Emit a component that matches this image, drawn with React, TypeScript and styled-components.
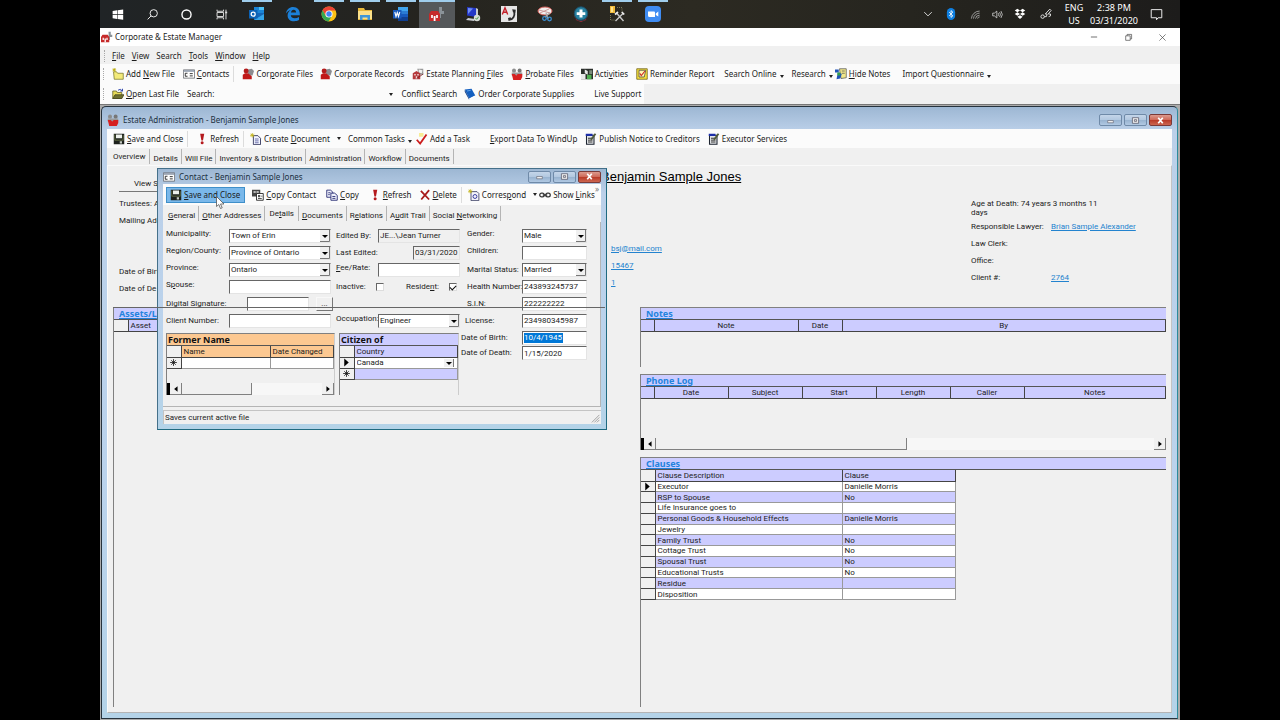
import React from 'react';
import styled, { createGlobalStyle, css } from 'styled-components';

const ui = '"Noto Sans", "Open Sans", sans-serif';
const classic = 'Roboto, "Liberation Sans", sans-serif';

const Global = createGlobalStyle`
  * { box-sizing: border-box; }
  html, body { margin: 0; padding: 0; background: #000; }
  body { font: 8px/12px ${ui}; color: #1c1c1c; }
  button, input, select { font: inherit; color: inherit; margin: 0; padding: 0; border-radius: 0; }
  a { color: #2383cf; }
  h1, h2 { margin: 0; font-weight: normal; }
  svg { display: block; flex: none; }
`;

/* ---------- shell ---------- */
const Screen = styled.div`
  min-height: 100vh;
  display: flex;
  flex-direction: column;
  margin: 0 100px;
  background: #ababab;
`;
const Taskbar = styled.div`
  height: 28px;
  display: flex;
  background: linear-gradient(90deg, #202426, #25241f 30%, #2c2a22 55%, #26251f 75%, #1d1c1b);
  color: #fff;
`;
const Task = styled.button<{ $w?: number; $open?: boolean; $active?: boolean }>`
  width: ${p => p.$w ?? 36}px;
  height: 28px;
  display: flex;
  align-items: center;
  justify-content: center;
  border: 0;
  background: ${p => (p.$active ? '#55585a' : 'transparent')};
  ${p => p.$open && css`
    background-image: linear-gradient(#9fcdec, #9fcdec);
    background-size: ${p.$active ? '100%' : '30px'} 2px;
    background-position: top center;
    background-repeat: no-repeat;
  `}
`;
const Tray = styled.div`
  margin-left: auto;
  display: flex;
  align-items: center;
  padding-right: 7px;
`;
const TrayCell = styled.div<{ $w: number }>`
  width: ${p => p.$w}px;
  display: flex;
  flex-direction: column;
  align-items: center;
  font-size: 9px;
  line-height: 13px;
  white-space: nowrap;
`;
const TitleBar = styled.header`
  height: 18px;
  display: flex;
  align-items: center;
  gap: 2px;
  padding: 0 2px 0 1px;
  background: #fff;
`;
const AppName = styled.span`flex: 1;`;
const TitleButton = styled.button`
  width: 32px;
  height: 18px;
  border: 0;
  background: none;
  display: flex;
  align-items: center;
  justify-content: center;
`;
const MenuBar = styled.nav`
  height: 18px;
  display: flex;
  align-items: center;
  gap: 7px;
  padding: 1px 0 0 4px;
  background: #f0f0f0;
`;
const FlatButton = styled.button`
  border: 0;
  background: none;
  white-space: nowrap;
  line-height: 12px;
`;
const Grip = styled.span<{ $flush?: boolean }>`
  width: 1px;
  height: 12px;
  margin-right: ${p => (p.$flush ? 0 : 8)}px;
  border-left: 1px dotted #a8a8a8;
`;
const Bar = styled.div<{ $h?: number; $pad?: number; $fit?: boolean }>`
  height: ${p => p.$h ?? 20}px;
  width: ${p => (p.$fit ? 'fit-content' : 'auto')};
  display: flex;
  align-items: center;
  padding: 0 ${p => p.$pad ?? 3}px;
  background: #fbfbfb;
  overflow: hidden;
`;
const Strip = styled.div`background: #f0f0f0;`;
const Item = styled.button<{ $l?: number; $hot?: boolean }>`
  height: 16px;
  margin-left: ${p => p.$l ?? 0}px;
  display: flex;
  align-items: center;
  gap: 2px;
  padding: 0;
  border: 0;
  background: none;
  white-space: nowrap;
  flex: none;
  ${p => p.$hot && css`
    padding: 0 4px 0 3px;
    border: 1px solid #3f8fc9;
    background: #7ab8ea;
  `}
`;
const Sep = styled.span`
  width: 1px;
  height: 16px;
  margin: 0 4px;
  background: #dcdcdc;
  flex: none;
`;
const Drop = styled.span<{ $low?: boolean }>`
  width: 0;
  height: 0;
  margin-left: ${p => (p.$low ? 1 : 5)}px;
  margin-top: ${p => (p.$low ? 5 : 0)}px;
  border: 2px solid transparent;
  border-top: 3px solid #222;
  border-bottom: 0;
`;
const More = styled.span`
  margin: 0 0 12px auto;
  line-height: 8px;
  color: #777;
`;
const SearchLabel = styled.label`
  display: flex;
  align-items: center;
  margin-left: 8px;
`;
const SearchBox = styled.input`
  width: 166px;
  height: 14px;
  margin-left: 4px;
  border: 0;
  background: transparent;
`;

/* ---------- MDI windows ---------- */
const Mdi = styled.main`
  flex: 1;
  display: flex;
  position: relative;
  padding: 1px 2px 1px 1px;
  border-top: 1px solid #777;
`;
const Frame = styled.section`
  flex: 1;
  display: flex;
  flex-direction: column;
  min-width: 0;
  padding: 0 5px 5px;
  border: 1px solid #27333d;
  border-right-color: #2c8b9c;
  border-radius: 5px 5px 0 0;
  background: linear-gradient(#9db7d3, #bbd0e9 24px, #bbd3ec 60%, #b4d3e8);
`;
const Caption = styled.header<{ $h: number; $top?: number }>`
  height: ${p => p.$h}px;
  padding-top: ${p => p.$top ?? 0}px;
  display: flex;
  align-items: center;
  gap: 4px;
  color: #20303f;
`;
const CaptionText = styled.h2`
  flex: 1;
  font-size: 8px;
  line-height: 12px;
`;
const CaptionButtons = styled.div`
  display: flex;
  gap: 2px;
`;
const CaptionButton = styled.button<{ $close?: boolean }>`
  width: 23px;
  height: 12px;
  display: flex;
  align-items: center;
  justify-content: center;
  border: 1px solid ${p => (p.$close ? '#7a3a38' : '#6f8aa8')};
  border-radius: 2px;
  background: ${p => (p.$close
    ? 'linear-gradient(#dc9a8e, #cf6a59 48%, #b93a28 52%, #cc6650)'
    : 'linear-gradient(#c4d5e9, #b2c8e0 48%, #98b3d0 52%, #b1c9e3)')};
`;
const Client = styled.div`
  flex: 1;
  display: flex;
  flex-direction: column;
  min-height: 0;
  background: #f0f0f0;
  font-family: ${classic};
`;
const Tabs = styled.div`
  height: 17px;
  display: flex;
  align-items: center;
  padding-left: 2px;
  background: #f0f0f0;
`;
const Tab = styled.button<{ $on?: boolean }>`
  height: 15px;
  padding: ${p => (p.$on ? '0 4px' : '4px 3px 0')};
  border: 0;
  border-right: 1px solid #b4b4b4;
  background: none;
  line-height: 11px;
  white-space: nowrap;
`;

/* ---------- overview page ---------- */
const Page = styled.div`
  flex: 1;
  display: flex;
  flex-direction: column;
  padding: 0 5px 5px;
  border: 1px solid #fafafa;
  border-right-color: #c4c4c4;
  border-bottom-color: #b4b4b4;
`;
const Summary = styled.div`
  height: 141px;
  display: grid;
  grid-template-columns: 488px 1fr 195px;
`;
const SummaryCol = styled.div<{ $top: number; $left?: number }>`
  padding: ${p => p.$top}px 0 0 ${p => p.$left ?? 0}px;
  min-width: 0;
`;
const ViewButton = styled.button`
  width: 90px;
  height: 15px;
  display: block;
  margin-bottom: 3px;
  padding-left: 15px;
  text-align: left;
  border: 0;
  border-bottom: 1px solid #777;
  background: #f0f0f0;
`;
const Line = styled.div<{ $left?: number }>`
  height: 17px;
  display: flex;
  align-items: center;
  padding-left: ${p => p.$left ?? 0}px;
  line-height: 12px;
  white-space: nowrap;
`;
const LineLabel = styled.span`width: 80px;`;
const Age = styled.p`
  width: 130px;
  height: 19px;
  margin: 0;
  line-height: 9px;
`;
const ClientName = styled.h1`
  height: 16px;
  margin-bottom: 55px;
  font: 13px/16px "Liberation Sans", sans-serif;
  color: #000;
  text-decoration: underline;
  white-space: nowrap;
`;
const Panels = styled.div`
  flex: 1;
  display: grid;
  grid-template-columns: 493fr 526fr;
  gap: 34px;
`;
const Stack = styled.div`
  display: flex;
  flex-direction: column;
  gap: 7px;
`;
const Panel = styled.section<{ $h?: number }>`
  ${p => (p.$h ? `height: ${p.$h}px;` : 'flex: 1;')}
  display: flex;
  flex-direction: column;
  border-left: 1px solid #808080;
  border-top: 1px solid #808080;
`;
const PanelTitle = styled.h2<{ $plain?: boolean; $warm?: boolean }>`
  height: 12px;
  padding-left: ${p => (p.$plain ? 1 : 5)}px;
  font: bold 9px/11px ${ui};
  color: ${p => (p.$plain ? '#111' : '#2383dd')};
  text-decoration: ${p => (p.$plain ? 'none' : 'underline')};
  background: ${p => (p.$warm ? '#fcc891' : '#ccccff')};
  border-bottom: 1px solid #555;
`;
const Grid = styled.table<{ $w?: string; $h?: number }>`
  width: ${p => p.$w ?? '100%'};
  ${p => p.$h && css`height: ${p.$h}px;`}
  table-layout: fixed;
  border-collapse: collapse;
  line-height: 9px;
`;
const Col = styled.col<{ $w?: number }>`
  ${p => p.$w && css`width: ${p.$w}px;`}
`;
const Th = styled.th<{ $left?: boolean; $warm?: boolean; $blank?: boolean }>`
  height: 11px;
  padding: 0 2px;
  font-weight: normal;
  text-align: ${p => (p.$left ? 'left' : 'center')};
  background: ${p => (p.$blank ? '#f0f0f0' : p.$warm ? '#fcc891' : '#ccccff')};
  border: 1px solid #444;
  border-width: 0 1px 1px 0;
  white-space: nowrap;
`;
const Td = styled.td<{ $head?: boolean; $tint?: boolean; $h?: number }>`
  height: ${p => p.$h ?? 11}px;
  padding: 0 2px;
  background: ${p => (p.$head ? '#f0f0f0' : p.$tint ? '#ccccff' : '#fff')};
  border: 1px solid ${p => (p.$head ? '#444' : '#999')};
  border-width: 0 1px 1px 0;
  white-space: nowrap;
`;
const Scroll = styled.div`
  height: 12px;
  display: flex;
  align-items: stretch;
  margin-top: auto;
  background: #f7f7f7;
  border-left: 3px solid #000;
`;
const ScrollArrow = styled.button`
  width: 12px;
  display: flex;
  align-items: center;
  justify-content: center;
  background: #f0f0f0;
  border: 0;
  border-right: 1px solid #808080;
  border-bottom: 1px solid #808080;
`;
const Thumb = styled.span<{ $w: string }>`
  width: ${p => p.$w};
  margin-right: auto;
  background: #f0f0f0;
  border-right: 1px solid #808080;
  border-bottom: 1px solid #808080;
`;

/* ---------- contact window ---------- */
const Floating = styled(Frame)`
  position: absolute;
  left: 57px;
  top: 63px;
  width: 450px;
  height: 262px;
  border-color: #45708a #1f6a80 #1f6a80 #45708a;
  border-radius: 0;
`;
const Form = styled.div`
  flex: 1;
  display: flex;
  padding: 5px 3px 0;
  border-right: 1px solid #b4b4b4;
  border-bottom: 1px solid #b4b4b4;
`;
const FormLeft = styled.div`width: 295px;`;
const FormCols = styled.div`display: flex; gap: 5px;`;
const Fields = styled.div<{ $w: number }>`width: ${p => p.$w}px;`;
const Field = styled.label<{ $label: number; $left?: number; $h?: number; $up?: boolean }>`
  height: ${p => p.$h ?? 17}px;
  display: grid;
  grid-template-columns: ${p => p.$label}px 1fr;
  align-items: center;
  padding-left: ${p => p.$left ?? 0}px;
  line-height: 12px;
  white-space: nowrap;
  > span:first-child { padding-bottom: ${p => (p.$up ? 3 : 0)}px; }
`;
const sunken = css`
  height: 14px;
  padding: 0 1px;
  border: 1px solid #e4e4e4;
  border-left-color: #666;
  border-top-color: #666;
  background: #fff;
  min-width: 0;
  width: 100%;
`;
const Input = styled.input<{ $grey?: boolean; $indent?: number; $marked?: boolean }>`
  ${sunken}
  width: ${p => (p.$indent ? `calc(100% - ${p.$indent}px)` : '100%')};
  margin-left: ${p => p.$indent ?? 0}px;
  ${p => p.$grey && css`background: #f0f0f0;`}
  ${p => p.$marked && css`
    color: #fff;
    background: linear-gradient(#0078d7, #0078d7) 1px 1px / 39px 10px no-repeat, #fff;
  `}
`;
const Signature = styled.span`
  display: grid;
  grid-template-columns: 62px 17px;
  gap: 7px;
  padding-left: 18px;
`;
const Dots = styled.button`
  height: 14px;
  border: 1px solid #f8f8f8;
  border-right-color: #777;
  border-bottom-color: #777;
  background: #f0f0f0;
  line-height: 8px;
`;
const PickBox = styled.span<{ $bare?: boolean }>`
  position: relative;
  display: block;
  min-width: 0;
  select {
    ${sunken}
    appearance: none;
    display: block;
    outline: 0;
    ${p => p.$bare && css`border: 0; padding: 0; height: 10px;`}
  }
  svg {
    position: absolute;
    right: 1px;
    top: 1px;
    pointer-events: none;
  }
`;
const Checks = styled.div`
  height: 17px;
  display: flex;
  align-items: center;
  padding-right: 3px;
  justify-content: space-between;
  label { display: flex; align-items: center; gap: 10px; }
`;
const Check = styled.input`
  appearance: none;
  width: 8px;
  height: 8px;
  border: 1px solid #ddd;
  border-left-color: #666;
  border-top-color: #666;
  background: #fff;
  display: grid;
  place-items: center;
  &:checked::after {
    content: '';
    width: 5px;
    height: 3px;
    border: solid #111;
    border-width: 0 0 1px 1px;
    transform: rotate(-45deg);
  }
`;
const Grids = styled.div`
  display: flex;
  gap: 4px;
  padding-top: 4px;
`;
const SubGrid = styled(Panel)<{ $w: number }>`
  flex: none;
  width: ${p => p.$w}px;
  height: 62px;
  border-right: 1px solid #ccc;
`;
const Status = styled.footer`
  height: 14px;
  display: flex;
  align-items: center;
  justify-content: space-between;
  margin-top: 3px;
  padding: 0 1px;
  border-top: 1px solid #c4c4c4;
  border-left: 1px solid #c4c4c4;
`;
const SeamLine = styled.div`
  position: absolute;
  left: 13px;
  top: 202px;
  width: 492px;
  height: 1px;
  background: #666;
  pointer-events: none;
`;
const Pointer = styled.div`
  position: absolute;
  left: 116px;
  top: 91px;
  pointer-events: none;
`;

/* ---------- drawings ---------- */
const art: Record<string, React.ReactNode> = {
  win: <path fill="#fff" d="M2 3.600l5.500-.8v5H2zM8.200 2.700L15 1.700v6.100H8.200zM2 8.500h5.500v5L2 12.700zM8.200 8.500H15v6.100l-6.800-1z" />,
  search: <g fill="none" stroke="#eee" strokeWidth="1.2"><circle cx="9.500" cy="6.500" r="4.500" /><path d="M6.300 9.700L2 14" /></g>,
  ring: <circle cx="8" cy="8" r="5.600" fill="none" stroke="#fff" strokeWidth="1.700" />,
  views: <g fill="none" stroke="#ddd" strokeWidth="1.2"><path d="M2.500 2v2h8V2M2.500 14v-2h8v2M2.500 5.500h8v5h-8zM13.500 2v12" /><path d="M12.500 5.500h2.500" strokeWidth="2" /></g>,
  outlook: <g><path fill="#1a86d8" d="M5 1h10v6H5z" /><path fill="#4fc0f4" d="M10 1h5v3h-5z" /><path fill="#1566b8" d="M5 7h10v7H5z" /><path fill="#35a5ea" d="M5 14l10-6v6z" /><path fill="#0c62b5" d="M0 4h8.500v8.500H0z" /><circle cx="4.200" cy="8.200" r="2" fill="none" stroke="#fff" strokeWidth="1.300" /></g>,
  edge: <path fill="#1c80d8" d="M1 7.500C1.500 3.500 4.500 1 8.200 1c4.300 0 6.600 3.200 6.600 6.500V9.200H5.800c.1 2 1.700 3 3.900 3 1.600 0 3-.4 4.300-1.200v3c-1.400.8-3 1.200-4.900 1.200-4 0-6.500-2.300-6.500-5.800 0-2.300 1.200-4.200 3.200-5.300C3.800 4.700 2.200 5.700 1 7.500zM5.900 6.600h5.200c0-1.700-.8-2.800-2.400-2.800-1.500 0-2.500 1.100-2.800 2.800z" />,
  chrome: <g><circle cx="8" cy="8" r="7.500" fill="#fbc116" /><path fill="#ea4335" d="M1.500 4.300A7.500 7.500 0 0 1 14.600 4.500H8L4.900 9.500z" /><path fill="#34a853" d="M1.500 4.300l3.500 6 6-.5-3.500 5.700A7.500 7.500 0 0 1 1.500 4.300z" /><circle cx="8" cy="8" r="3.600" fill="#fff" /><circle cx="8" cy="8" r="2.700" fill="#4285f4" /></g>,
  folder: <g><path fill="#e8b93c" d="M1 2h6l1 2h7v10H1z" /><path fill="#fbe08a" d="M1 5h14v8H1z" /><path fill="#3f97d8" d="M3 9h10v5h-2.500v-2.500h-5V14H3z" /></g>,
  word: <g><path fill="#41a5ee" d="M5 1h10v4H5z" /><path fill="#2b7cd3" d="M5 5h10v3H5z" /><path fill="#185abd" d="M5 8h10v3H5z" /><path fill="#103f91" d="M5 11h10v4H5z" /><path fill="#185abd" d="M0 4h8.500v8.500H0z" /><path fill="none" stroke="#fff" strokeWidth="1.100" d="M1.800 6l1.200 4.500L4.300 6.500 5.500 10.500 6.800 6" /></g>,
  app: <g><path fill="#8a9298" d="M10 1h3v4h2v3h-3v4h-1.500z" /><path fill="#c62a2a" d="M0 8l2-3h7l2 3v7H0z" /><path fill="#f2dede" d="M2 9h2v3H2zM7 9h2v3H7z" /><path fill="#fff" d="M4.700 10h1.800v5H4.700z" /></g>,
  rdp: <g><path fill="#2438c8" d="M2 1l9 1v9l-9-1.500z" /><path fill="#6f8df2" d="M3 2l5 .6L3 8z" /><path fill="#c8ccd2" d="M11 2l2 1v8l-2 1zM3 12l7 1-1 2-8-1z" /><circle cx="12" cy="12" r="3.200" fill="#d7dcd7" /><path d="M10.500 12l1.200 1.300 2-2.600" fill="none" stroke="#4a9a4a" /></g>,
  pdf: <g><path fill="#e6e6e6" d="M0 0h16v16H0z" /><path fill="none" stroke="#c4202a" strokeWidth="1.400" d="M1.300 8.500L4 1.800l2.700 6.700M2.400 6.200h3.400" /><path fill="none" stroke="#2a2a2a" strokeWidth="1.800" d="M8.500 13.600c3.500 0 5.500-3.600 4.800-8" /><path fill="#2a2a2a" d="M11.200 3.200l3.600.6-.5 3-2.300-.6zM7 12l2.600-.8.8 2.600-2.800 1.200z" /></g>,
  snip: <g><ellipse cx="8" cy="5" rx="7" ry="4" fill="#f1eeee" stroke="#d4605a" /><path d="M2 4l11 3M3 7l9-4" stroke="#c99" /><path d="M9 7l2 6M13 7l-5 4" stroke="#aaa" strokeWidth="1.2" /><circle cx="7.500" cy="12.500" r="1.800" fill="none" stroke="#3c8ed0" strokeWidth="1.300" /><circle cx="12.500" cy="13" r="1.800" fill="none" stroke="#3c8ed0" strokeWidth="1.300" /></g>,
  plus: <g><path fill="#a0283a" d="M1 8a7 7 0 0 0 14 0l-2 6-5 2-5-2z" /><circle cx="8" cy="7.500" r="6.700" fill="#27809f" stroke="#1d4e68" /><path fill="#fff" d="M6.500 3.500h3v2.700h2.800v2.700H9.500v2.700h-3V8.900H3.700V6.200h2.800z" /></g>,
  tools: <g><path fill="#f0bb3c" d="M1 0h5v7H1z" /><path fill="#ffe38e" d="M2 1h2v5H2z" /><path d="M8 1.500h5v5M1.500 9v5h4" fill="none" stroke="#7a7a5a" strokeDasharray="1 1" /><path d="M7.500 7l7 8M14 7.500L6.500 15" stroke="#c8c8c8" strokeWidth="1.400" /><path d="M6 8.500l3-2.500M12.800 6l2.400 2.500" stroke="#ececec" strokeWidth="1.800" /></g>,
  zoom: <g><rect width="16" height="16" rx="4" fill="#3f8cf2" /><path fill="#fff" d="M3 5.500h6q1 0 1 1V11H4.500Q3 11 3 9.500zM10.800 7.500L13.300 5.600v5L10.800 9z" /></g>,
  chevron: <path d="M2 5l6 6 6-6" fill="none" stroke="#eee" strokeWidth="1.400" />,
  bt: <g><rect x="2.500" width="11" height="16" rx="5.500" fill="#0f7fe0" /><path d="M5.500 5.500l5 5L8 12.500v-9l2.500 2-5 5" fill="none" stroke="#fff" strokeWidth="1.100" /></g>,
  wifi: <g fill="none" stroke="#bbb" strokeWidth="1.100"><path d="M2 14A12 12 0 0 1 14 3M5 14a9 9 0 0 1 9-8M8 14a6 6 0 0 1 6-5M11 14a3 3 0 0 1 3-2.500" /></g>,
  sound: <g fill="none" stroke="#ddd" strokeWidth="1.100"><path d="M1 6h2.500L7 3v10l-3.500-3H1zM9 6q1.500 2 0 4M11 4.500q2.600 3.500 0 7M13 3q4 5 0 10" /></g>,
  dropbox: <path fill="#fff" d="M4.500 1L8 3.300 4.500 5.600 1 3.300zM11.500 1L15 3.300l-3.500 2.300L8 3.300zM4.500 5.700L8 8l-3.500 2.300L1 8zM11.500 5.700L15 8l-3.500 2.300L8 8zM8 9.500l3.500 2.300L8 14.500l-3.500-2.700z" />,
  pen: <g fill="none" stroke="#ddd" strokeWidth="1.300"><circle cx="3.500" cy="11.500" r="2.300" /><path d="M5.800 11.500h2.700l1-3.500H7l6-6.500 1.800 1.800L11 8h3v2.500l-2.500 1" /></g>,
  notice: <path d="M1.500 2h13v10H10l-2 2.500V12H1.500z" fill="none" stroke="#eee" strokeWidth="1.2" />,
  minus: <path d="M3 8h10" stroke="#444" strokeWidth="1.2" />,
  restore: <path d="M3 5h8v8H3zM5.500 5V2.500h8v8H11" fill="none" stroke="#444" strokeWidth="1.2" />,
  close: <path d="M2.500 2.500l11 11M13.500 2.500l-11 11" stroke="#444" strokeWidth="1.2" />,
  newfile: <g><path fill="#f3ea7a" stroke="#77762a" d="M2 5h4l1.500 2H15v8H3z" /><path stroke="#b8a800" d="M3 0v5M.5 2.500h5M1 .8l4 3.500M5 .8L1 4.300" /></g>,
  card: <g><path fill="#fff" stroke="#55595f" d="M.5 2.500h15v11H.5z" /><path fill="#8b97a8" d="M1 3h14v2H1z" /><path stroke="#222" strokeWidth="1.2" d="M6 7H3v4h3M9 7.500h4M9 10.500h4" fill="none" /></g>,
  corp: <g><path fill="#8c8c90" d="M8 2l5-1 3 3-2 6H8z" /><circle cx="5.500" cy="4" r="3.300" fill="#b41c1c" /><path fill="#c01818" d="M1 15V9l3-2h4l5 4v4z" /></g>,
  estate: <g><path fill="#999" d="M7 1h8v8H9z" /><path fill="#f2f2f2" d="M9 2l5 1-1 4-4-1z" /><path fill="#b5393c" d="M1 7l5-3 5 3v8H1z" /><path fill="#eed5d5" d="M3 8h2v2H3zM7 8h2v2H7zM5 11h2v4H5z" /><path stroke="#7a1a1c" d="M6 14l9-6" /></g>,
  probate: <g><circle cx="4" cy="3.500" r="2.700" fill="#8d8d8d" /><circle cx="11.500" cy="3.500" r="2.700" fill="#777" /><path fill="#9a9a9a" d="M1 6h14v4H1z" /><path fill="#d62020" d="M1 8h4l2 2 2-2h6v4l-2 4H3z" /></g>,
  activity: <g><path fill="#2b2f2b" d="M0 1h16v14H0z" /><path fill="#e8e8e8" d="M5 2l4 2v5l-4-2zM0 8h6v7H0z" /><path fill="#4fae50" d="M8 9h6v6H8z" /><path fill="#7b8c7b" d="M11 3h4v5h-4z" /></g>,
  reminder: <g><path fill="#f5e03c" stroke="#6a5a10" d="M1 1h14v14H1z" /><path fill="#fff6b0" stroke="#444" d="M4 3h9l-2 9H4z" /><path d="M5 7l2 3 5-6" stroke="#c22" fill="none" strokeWidth="1.400" /></g>,
  hide: <g><path fill="#f2e88a" stroke="#555" d="M6 1h9v12l-7 1z" /><path fill="#1f53b8" d="M0 2h5v4H0zM5 6l4 2-2 6-5 1 1-5z" /><path fill="#32a04c" d="M3 6h4v4H3z" /><path d="M9 4h4M9 7h4" stroke="#555" /></g>,
  open: <g><path fill="#e8dc58" stroke="#5c5a20" d="M1 4h5l1 2h6v8H1z" /><path fill="#6f7030" stroke="#43441c" d="M4 9h12l-3 5H1z" /><path d="M8 3q3-3 6 1M14 1v3h-3" stroke="#223aa8" fill="none" strokeWidth="1.2" /></g>,
  book: <g><path fill="#1560c0" d="M1 2l9-1 5 9-8 4z" /><path fill="#0c3c88" d="M1 2l6 12v2L1 5z" /><path fill="#fff" d="M7 14l8-4v1.500L7 15.500z" /><path stroke="#7ab6f0" d="M4 4l5-1" /></g>,
  save: <g><path fill="#1d211d" d="M1 1h14v14H1z" /><path fill="#eef2ec" d="M4 2h8v5H4z" /><path fill="#76834e" d="M2 2h1v8H2zM13 3h1v7h-1zM3 9h10v1H3z" /><path fill="#c6ccc4" d="M9 11h3v3H9z" /></g>,
  bang: <g fill="#b51a1e"><path d="M5.500 1h5.500L9.300 10H7.200z" /><circle cx="8.200" cy="13" r="2" /></g>,
  doc: <g><path fill="#f2f4ff" stroke="#33355c" strokeWidth="1.2" d="M4.500 3.500h6L14 7v8.500H4.500z" /><path stroke="#444a90" d="M6.500 8h5M6.500 10.500h5M6.500 13h5" /><path stroke="#c0b010" d="M3 0v6M0 3h6M1 1l4 4M5 1L1 5" /></g>,
  tick: <g><path fill="#f6e66a" d="M4 0h6v5H4z" opacity=".7" /><path d="M1 9l4.500 5L14 2" fill="none" stroke="#cc1c1c" strokeWidth="2.400" /></g>,
  publish: <g><path fill="#e4e6e8" stroke="#1e2430" strokeWidth="1.400" d="M2 3h10v12H2z" /><path fill="#1c2fa8" d="M1 1h9v3H1z" /><path d="M4 7h6M4 9.500h6M4 12h6" stroke="#222" strokeWidth="1.2" /><path d="M8 9l6-8" stroke="#4f5a3a" strokeWidth="2.400" /></g>,
  copycard: <g><path fill="#444" d="M0 1h11v9H0z" /><path fill="#ddd" d="M2 3h3v2H2zM6 3h3v2H6z" /><path fill="#fff" stroke="#2a2a2a" strokeWidth="1.2" d="M6 6h9v9H6z" /><path fill="#555" d="M8 8h3v3H8zM8 12h5v1.200H8zM12 9h2v1h-2z" /></g>,
  copy: <g fill="#eef0fb" stroke="#2a2f74" strokeWidth="1.2"><path d="M1 1.500h5L9 4v7H1z" /><path d="M6.500 5.500h5L15 8.500V15H6.500z" /><path d="M3 5h3M3 7.500h2M8.500 10h4M8.500 12.500h4" /></g>,
  cross: <path d="M2.500 2.500l11 11.500M13.500 1.500L3 14" stroke="#a81a1a" strokeWidth="2.400" />,
  mail: <g><path fill="#f4f4fb" stroke="#44476a" strokeWidth="1.2" d="M4 3.500h8L14.500 6v9.500H4z" /><circle cx="9.300" cy="10" r="2.600" fill="none" stroke="#33389a" strokeWidth="1.300" /><path stroke="#c0b010" d="M3 0v6M0 3h6M1 1l4 4M5 1L1 5" /></g>,
  links: <g fill="none" stroke="#333" strokeWidth="1.700"><rect x="1" y="5.500" width="6" height="5" rx="2.500" /><rect x="9" y="5.500" width="6" height="5" rx="2.500" /><path d="M5 8h6" /></g>,
  arrowL: <path fill="#000" d="M10.500 3.500v9L5 8z" />,
  arrowR: <path fill="#000" d="M5.500 3.500v9L11 8z" />,
  play: <path fill="#000" d="M4 1v14l8-7z" />,
  star: <path d="M8 2v12M2 8h12M4 4l8 8M12 4l-8 8" stroke="#111" strokeWidth="1.400" />,
  wmin: <path d="M3 8h10v4H3z" fill="#eee" stroke="#556" />,
  wmax: <path d="M2.500 3h11v10h-11zM6 6.500h4v3H6z" fill="#eee" stroke="#556" strokeWidth="1.300" />,
  wclose: <path d="M4 3l8 10M12 3L4 13" stroke="#fff" strokeWidth="3" />,
  resize: <path d="M15 3L3 15M15 7l-8 8M15 11l-4 4" stroke="#999" strokeWidth="1.400" />,
};
const Icon = ({ n, s = 12 }: { n: string; s?: number }) => (
  <svg width={s} height={s} viewBox="0 0 16 16" aria-hidden="true">{art[n]}</svg>
);

/* An underscore in a caption marks the accelerator letter after it. */
const Accel = ({ t }: { t: string }) => {
  const i = t.indexOf('_');
  if (i < 0) return <span>{t}</span>;
  return <span>{t.slice(0, i)}<u>{t[i + 1]}</u>{t.slice(i + 2)}</span>;
};
const Tool = ({ n, t, l, hot, drop }: { n?: string; t: string; l?: number; hot?: boolean; drop?: 'mid' | 'low' }) => (
  <Item $l={l} $hot={hot}>
    {n && <Icon n={n} />}
    <Accel t={t} />
    {drop && <Drop $low={drop === 'low'} />}
  </Item>
);
const WindowButtons = () => (
  <CaptionButtons>
    <CaptionButton aria-label="Minimize"><Icon n="wmin" s={9} /></CaptionButton>
    <CaptionButton aria-label="Maximize"><Icon n="wmax" s={9} /></CaptionButton>
    <CaptionButton aria-label="Close" $close><Icon n="wclose" s={9} /></CaptionButton>
  </CaptionButtons>
);
const Pick = ({ v, bare, label }: { v: string; bare?: boolean; label?: string }) => (
  <PickBox $bare={bare}>
    <select defaultValue={v} aria-label={label}><option>{v}</option></select>
    <svg width="10" height={bare ? 8 : 12} viewBox="0 0 10 12" preserveAspectRatio="xMidYMid slice" aria-hidden="true">
      <path fill="#f0f0f0" d="M0 0h10v12H0z" />
      <path fill="none" stroke="#777" d="M9.500 0v11.500H0" />
      <path fill="#000" d="M2 5h6L5 8z" />
    </svg>
  </PickBox>
);

const tasks: { n: string; w?: number; open?: boolean; active?: boolean }[] = [
  { n: 'win', w: 35 }, { n: 'search', w: 35 }, { n: 'ring', w: 33 }, { n: 'views', w: 36 },
  { n: 'outlook', open: true }, { n: 'edge' }, { n: 'chrome', open: true }, { n: 'folder', open: true },
  { n: 'word', open: true }, { n: 'app', open: true, active: true }, { n: 'rdp' }, { n: 'pdf' },
  { n: 'snip' }, { n: 'plus' }, { n: 'tools', open: true }, { n: 'zoom', open: true },
];
const clauses = [
  ['Executor', 'Danielle Morris'], ['RSP to Spouse', 'No'], ['Life Insurance goes to', ''],
  ['Personal Goods & Household Effects', 'Danielle Morris'], ['Jewelry', ''], ['Family Trust', 'No'],
  ['Cottage Trust', 'No'], ['Spousal Trust', 'No'], ['Educational Trusts', 'No'], ['Residue', ''], ['Disposition', ''],
];

const Desktop = () => (
  <Taskbar>
    {tasks.map(t => (
      <Task key={t.n} $w={t.w} $open={t.open} $active={t.active} aria-label={t.n}>
        <Icon n={t.n} s={t.w ? 13 : 16} />
      </Task>
    ))}
    <Tray>
      <TrayCell $w={22}><Icon n="chevron" s={10} /></TrayCell>
      <TrayCell $w={24}><Icon n="bt" s={12} /></TrayCell>
      <TrayCell $w={24}><Icon n="wifi" s={11} /></TrayCell>
      <TrayCell $w={20}><Icon n="sound" s={11} /></TrayCell>
      <TrayCell $w={26}><Icon n="dropbox" s={12} /></TrayCell>
      <TrayCell $w={26}><Icon n="pen" s={12} /></TrayCell>
      <TrayCell $w={30}><span>ENG</span><span>US</span></TrayCell>
      <TrayCell $w={50}><span>2:38 PM</span><span>03/31/2020</span></TrayCell>
      <TrayCell $w={34}><Icon n="notice" s={13} /></TrayCell>
    </Tray>
  </Taskbar>
);

const Overview = () => (
  <Page>
    <Summary>
      <SummaryCol $top={11} $left={6}>
        <ViewButton>View S</ViewButton>
        <Line>Trustees: A</Line>
        <Line>Mailing Add</Line>
        <Line />
        <Line />
        <Line>Date of Birt</Line>
        <Line>Date of De</Line>
      </SummaryCol>
      <SummaryCol $top={3}>
        <ClientName>Benjamin Sample Jones</ClientName>
        <Line $left={10}><a href="#mail">bsj@mail.com</a></Line>
        <Line $left={10}><a href="#file">15467</a></Line>
        <Line $left={10}><a href="#count">1</a></Line>
      </SummaryCol>
      <SummaryCol $top={33}>
        <Age>Age at Death: 74 years 3 months 11 days</Age>
        <Line><LineLabel>Responsible Lawyer:</LineLabel><a href="#lawyer">Brian Sample Alexander</a></Line>
        <Line>Law Clerk:</Line>
        <Line>Office:</Line>
        <Line><LineLabel>Client #:</LineLabel><a href="#client">2764</a></Line>
      </SummaryCol>
    </Summary>
    <Panels>
      <Panel>
        <PanelTitle>Assets/L</PanelTitle>
        <Grid>
          <colgroup><Col $w={14} /><Col /></colgroup>
          <thead><tr><Th $blank /><Th $left>Asset</Th></tr></thead>
        </Grid>
      </Panel>
      <Stack>
        <Panel $h={60}>
          <PanelTitle>Notes</PanelTitle>
          <Grid>
            <colgroup><Col $w={13} /><Col $w={144} /><Col $w={44} /><Col /></colgroup>
            <thead><tr><Th /><Th>Note</Th><Th>Date</Th><Th>By</Th></tr></thead>
          </Grid>
        </Panel>
        <Panel $h={76}>
          <PanelTitle>Phone Log</PanelTitle>
          <Grid>
            <colgroup>
              <Col $w={13} />
              {[1, 2, 3, 4, 5].map(c => <Col key={c} $w={74} />)}
              <Col />
            </colgroup>
            <thead>
              <tr><Th /><Th>Date</Th><Th>Subject</Th><Th>Start</Th><Th>Length</Th><Th>Caller</Th><Th>Notes</Th></tr>
            </thead>
          </Grid>
          <Scroll>
            <ScrollArrow aria-label="Scroll left"><Icon n="arrowL" s={10} /></ScrollArrow>
            <Thumb $w="48%" />
            <ScrollArrow aria-label="Scroll right"><Icon n="arrowR" s={10} /></ScrollArrow>
          </Scroll>
        </Panel>
        <Panel>
          <PanelTitle>Clauses</PanelTitle>
          <Grid $w="315px" $h={130}>
            <colgroup><Col $w={14} /><Col $w={187} /><Col /></colgroup>
            <thead><tr><Th $blank /><Th $left>Clause Description</Th><Th $left>Clause</Th></tr></thead>
            <tbody>
              {clauses.map(([name, value], i) => (
                <tr key={name}>
                  <Td $head $h={10}>{i === 0 && <Icon n="play" s={9} />}</Td>
                  <Td $h={10} $tint={i % 2 === 1}>{name}</Td>
                  <Td $h={10} $tint={i % 2 === 1}>{value}</Td>
                </tr>
              ))}
            </tbody>
          </Grid>
        </Panel>
      </Stack>
    </Panels>
  </Page>
);

const Contact = () => (
  <Floating>
    <Caption $h={15}>
      <Icon n="card" />
      <CaptionText>Contact - Benjamin Sample Jones</CaptionText>
      <WindowButtons />
    </Caption>
    <Bar $h={21} $pad={3}>
      <Tool n="save" t="_Save and Close" hot />
      <Tool n="copycard" t="_Copy Contact" l={7} />
      <Tool n="copy" t="_Copy" l={10} />
      <Tool n="bang" t="_Refresh" l={10} />
      <Tool n="cross" t="_Delete" l={7} />
      <Sep />
      <Tool n="mail" t="Corres_pond" l={2} drop="mid" />
      <Tool n="links" t="Show _Links" l={2} />
      <More>»</More>
    </Bar>
    <Client>
      <Tabs>
        <Tab><Accel t="_General" /></Tab>
        <Tab><Accel t="_Other Addresses" /></Tab>
        <Tab $on><Accel t="De_tails" /></Tab>
        <Tab><Accel t="_Documents" /></Tab>
        <Tab><Accel t="R_elations" /></Tab>
        <Tab><Accel t="A_udit Trail" /></Tab>
        <Tab><Accel t="Social _Networking" /></Tab>
      </Tabs>
      <Form>
        <FormLeft>
          <FormCols>
            <Fields $w={165}>
              <Field $up $label={63}><span>Municipality:</span><Pick v="Town of Erin" /></Field>
              <Field $up $label={63}><span>Region/County:</span><Pick v="Province of Ontario" /></Field>
              <Field $up $label={63}><span>Province:</span><Pick v="Ontario" /></Field>
              <Field $up $label={63}><Accel t="S_pouse:" /><Input /></Field>
              <Field $label={63}>
                <Accel t="Di_gital Signature:" />
                <Signature><Input /><Dots aria-label="Browse">...</Dots></Signature>
              </Field>
              <Field $label={63}><span>Client Number:</span><Input /></Field>
            </Fields>
            <Fields $w={124}>
              <Field $label={42}><span>Edited By:</span><Input $grey readOnly defaultValue={'JE...\\Jean Turner'} /></Field>
              <Field $label={42}><span>Last Edited:</span><Input $grey readOnly $indent={35} defaultValue="03/31/2020" /></Field>
              <Field $up $label={42}><Accel t="_Fee/Rate:" /><Input /></Field>
              <Checks>
                <label><span>Inactive:</span><Check type="checkbox" /></label>
                <label><Accel t="Reside_nt:" /><Check type="checkbox" defaultChecked /></label>
              </Checks>
              <Line />
              <Field $up $label={42}><span>Occupation:</span><Pick v="Engineer" /></Field>
            </Fields>
          </FormCols>
          <Grids>
            <SubGrid $w={169}>
              <PanelTitle $plain $warm>Former Name</PanelTitle>
              <Grid>
                <colgroup><Col $w={14} /><Col $w={89} /><Col /></colgroup>
                <thead><tr><Th $blank /><Th $left $warm>Name</Th><Th $left $warm>Date Changed</Th></tr></thead>
                <tbody><tr><Td $head><Icon n="star" s={9} /></Td><Td /><Td /></tr></tbody>
              </Grid>
              <Scroll>
                <ScrollArrow aria-label="Scroll left"><Icon n="arrowL" s={10} /></ScrollArrow>
                <Thumb $w="70px" />
                <ScrollArrow aria-label="Scroll right"><Icon n="arrowR" s={10} /></ScrollArrow>
              </Scroll>
            </SubGrid>
            <SubGrid $w={120}>
              <PanelTitle $plain>Citizen of</PanelTitle>
              <Grid>
                <colgroup><Col $w={14} /><Col /></colgroup>
                <thead><tr><Th $blank /><Th $left>Country</Th></tr></thead>
                <tbody>
                  <tr><Td $head><Icon n="play" s={9} /></Td><Td><Pick bare v="Canada" label="Country" /></Td></tr>
                  <tr><Td $head><Icon n="star" s={9} /></Td><Td $tint /></tr>
                </tbody>
              </Grid>
            </SubGrid>
          </Grids>
        </FormLeft>
        <Fields $w={126}>
          <Field $up $label={55} $left={6}><span>Gender:</span><Pick v="Male" /></Field>
          <Field $up $label={55} $left={6}><span>Children:</span><Input /></Field>
          <Field $label={55} $left={6}><span>Marital Status:</span><Pick v="Married" /></Field>
          <Field $label={55} $left={6}><span>Health Number:</span><Input defaultValue="243893245737" /></Field>
          <Field $label={55} $left={6}><span>S.I.N:</span><Input defaultValue="222222222" /></Field>
          <Field $label={57} $left={4}><span>License:</span><Input defaultValue="234980345987" /></Field>
          <Field $label={61}><span>Date of Birth:</span><Input $marked defaultValue="10/4/1945" /></Field>
          <Field $label={61} $h={14}><span>Date of Death:</span><Input defaultValue="1/15/2020" /></Field>
        </Fields>
      </Form>
      <Status><span>Saves current active file</span><Icon n="resize" s={10} /></Status>
    </Client>
  </Floating>
);

export default function App() {
  return (
    <>
      <Global />
      <Screen>
        <Desktop />
        <TitleBar>
          <Icon n="app" />
          <AppName>Corporate &amp; Estate Manager</AppName>
          <TitleButton aria-label="Minimize"><Icon n="minus" s={10} /></TitleButton>
          <TitleButton aria-label="Restore"><Icon n="restore" s={9} /></TitleButton>
          <TitleButton aria-label="Close"><Icon n="close" s={9} /></TitleButton>
        </TitleBar>
        <MenuBar>
          <Grip $flush />
          {['_File', '_View', 'Search', '_Tools', '_Window', '_Help'].map(t => (
            <FlatButton key={t}><Accel t={t} /></FlatButton>
          ))}
        </MenuBar>
        <Bar>
          <Grip />
          <Tool n="newfile" t="Add _New File" />
          <Tool n="card" t="_Contacts" l={8} />
          <Sep />
          <Tool n="corp" t="Cor_porate Files" l={4} />
          <Tool n="corp" t="Corporate Records" l={7} />
          <Tool n="estate" t="Estate Planning _Files" l={8} />
          <Tool n="probate" t="_Probate Files" l={8} />
          <Tool n="activity" t="Acti_vities" l={7} />
          <Tool n="reminder" t="Reminder Report" l={8} />
          <Tool t="Search Online" l={10} drop="low" />
          <Tool t="Research" l={8} drop="low" />
          <Tool n="hide" t="_Hide Notes" l={2} />
          <Tool t="Import Questionnaire" l={12} drop="low" />
        </Bar>
        <Strip>
          <Bar $fit>
            <Grip />
            <Tool n="open" t="_Open Last File" />
            <SearchLabel>Search:<SearchBox type="text" /></SearchLabel>
            <Drop />
            <Tool t="Conflict Search" l={8} />
            <Tool n="book" t="Order Corporate Supplies" l={7} />
            <Tool t="Live Support" l={20} />
          </Bar>
        </Strip>
        <Mdi>
          <Frame>
            <Caption $h={22} $top={4}>
              <Icon n="probate" />
              <CaptionText>Estate Administration - Benjamin Sample Jones</CaptionText>
              <WindowButtons />
            </Caption>
            <Bar $h={19} $pad={6}>
              <Tool n="save" t="_Save and Close" />
              <Sep />
              <Tool n="bang" t="Refresh" l={4} />
              <Sep />
              <Tool n="doc" t="Create _Document" l={2} drop="mid" />
              <Tool t="Common Tasks" l={7} drop="low" />
              <Tool n="tick" t="Add a Task" l={4} />
              <Tool t="_Export Data To WindUp" l={20} />
              <Tool n="publish" t="Publish Notice to Creditors" l={8} />
              <Tool n="publish" t="Executor Services" l={8} />
            </Bar>
            <Client>
              <Tabs>
                <Tab $on>Overview</Tab>
                {['Details', 'Will File', 'Inventory & Distribution', 'Administration', 'Workflow', 'Documents'].map(t => (
                  <Tab key={t}>{t}</Tab>
                ))}
              </Tabs>
              <Overview />
            </Client>
          </Frame>
          <Contact />
          <SeamLine />
          <Pointer>
            <svg width="9" height="13" viewBox="0 0 9 13" aria-hidden="true">
              <path d="M.5.5v10l2.300-2 1.700 4 1.700-.7-1.700-3.800h3.500z" fill="#fff" stroke="#555" strokeWidth=".8" />
            </svg>
          </Pointer>
        </Mdi>
      </Screen>
    </>
  );
}
